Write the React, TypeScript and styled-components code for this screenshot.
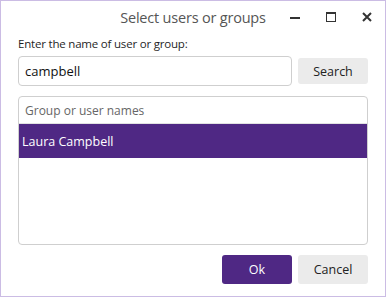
import React from "react";
import styled, { createGlobalStyle } from "styled-components";

const GlobalStyle = createGlobalStyle`
  html, body {
    margin: 0;
    padding: 0;
    background: #fff;
  }
  body {
    font-family: "Open Sans", "Noto Sans", sans-serif;
  }
`;

const purple = "#4f2884";

export default function App() {
  return (
    <>
      <GlobalStyle />
      <Window>
        <TitleBar>
          <span />
          <Title>Select users or groups</Title>
          <Controls>
            <ControlButton aria-label="Minimize">
              <svg width="12" height="12" viewBox="0 0 12 12">
                <rect x="1" y="6" width="10" height="2" fill="#333" />
              </svg>
            </ControlButton>
            <ControlButton aria-label="Maximize">
              <svg width="12" height="12" viewBox="0 0 12 12">
                <rect x="1.5" y="1.5" width="9" height="9" fill="none" stroke="#333" strokeWidth="1" />
                <rect x="1" y="1" width="10" height="2" fill="#333" />
              </svg>
            </ControlButton>
            <ControlButton aria-label="Close">
              <svg width="12" height="12" viewBox="0 0 12 12">
                <path d="M2 2 L10 10 M10 2 L2 10" stroke="#333" strokeWidth="2" />
              </svg>
            </ControlButton>
          </Controls>
        </TitleBar>

        <Body>
          <Label>Enter the name of user or group:</Label>
          <SearchRow>
            <Input defaultValue="campbell" />
            <GrayButton>Search</GrayButton>
          </SearchRow>

          <List>
            <ListHeader>Group or user names</ListHeader>
            <ListItem selected>Laura Campbell</ListItem>
          </List>

          <Footer>
            <PrimaryButton>Ok</PrimaryButton>
            <GrayButton>Cancel</GrayButton>
          </Footer>
        </Body>
      </Window>
    </>
  );
}

const Window = styled.div`
  width: 386px;
  height: 297px;
  box-sizing: border-box;
  border: 1px solid #cbbce4;
  display: flex;
  flex-direction: column;
  background: #fff;
`;

const TitleBar = styled.div`
  display: grid;
  grid-template-columns: 1fr auto 1fr;
  align-items: center;
  height: 32px;
`;

const Title = styled.div`
  font-size: 14.5px;
  color: #555;
  letter-spacing: -0.2px;
`;

const Controls = styled.div`
  display: flex;
  justify-content: flex-end;
  height: 100%;
`;

const ControlButton = styled.div`
  width: 36px;
  height: 100%;
  display: flex;
  align-items: center;
  justify-content: center;
`;

const Body = styled.div`
  flex: 1;
  display: flex;
  flex-direction: column;
  padding: 0 17px 12px;
`;

const Label = styled.div`
  font-size: 11.5px;
  letter-spacing: -0.2px;
  color: #1f1f1f;
  line-height: 16px;
  margin-top: 3px;
`;

const SearchRow = styled.div`
  display: flex;
  align-items: center;
  gap: 6px;
  margin-top: 4px;
`;

const Input = styled.input`
  flex: 1;
  height: 30px;
  box-sizing: border-box;
  border: 1px solid #cfcfcf;
  border-radius: 4px;
  padding: 0 6px;
  font-family: inherit;
  font-size: 13px;
  color: #111;
  outline: none;
`;

const GrayButton = styled.button`
  width: 70px;
  height: 26px;
  border: none;
  border-radius: 3px;
  background: #ebebeb;
  color: #222;
  font-family: inherit;
  font-size: 12.5px;
  padding: 0;
`;

const PrimaryButton = styled(GrayButton)`
  background: ${purple};
  color: #fff;
`;

const List = styled.div`
  margin-top: 10px;
  height: 149px;
  box-sizing: border-box;
  border: 1px solid #cfcfcf;
  border-radius: 4px;
  overflow: hidden;
`;

const ListHeader = styled.div`
  height: 26px;
  display: flex;
  align-items: center;
  padding: 0 6px;
  font-size: 12px;
  color: #666;
  border-bottom: 1px solid #e2e2e2;
`;

const ListItem = styled.div<{ selected?: boolean }>`
  height: 34px;
  display: flex;
  align-items: center;
  padding: 0 3px;
  font-size: 12.5px;
  background: ${(p) => (p.selected ? purple : "transparent")};
  color: ${(p) => (p.selected ? "#fff" : "#222")};
`;

const Footer = styled.div`
  margin-top: auto;
  display: flex;
  justify-content: flex-end;
  gap: 6px;

  & > button {
    height: 29px;
  }
`;
